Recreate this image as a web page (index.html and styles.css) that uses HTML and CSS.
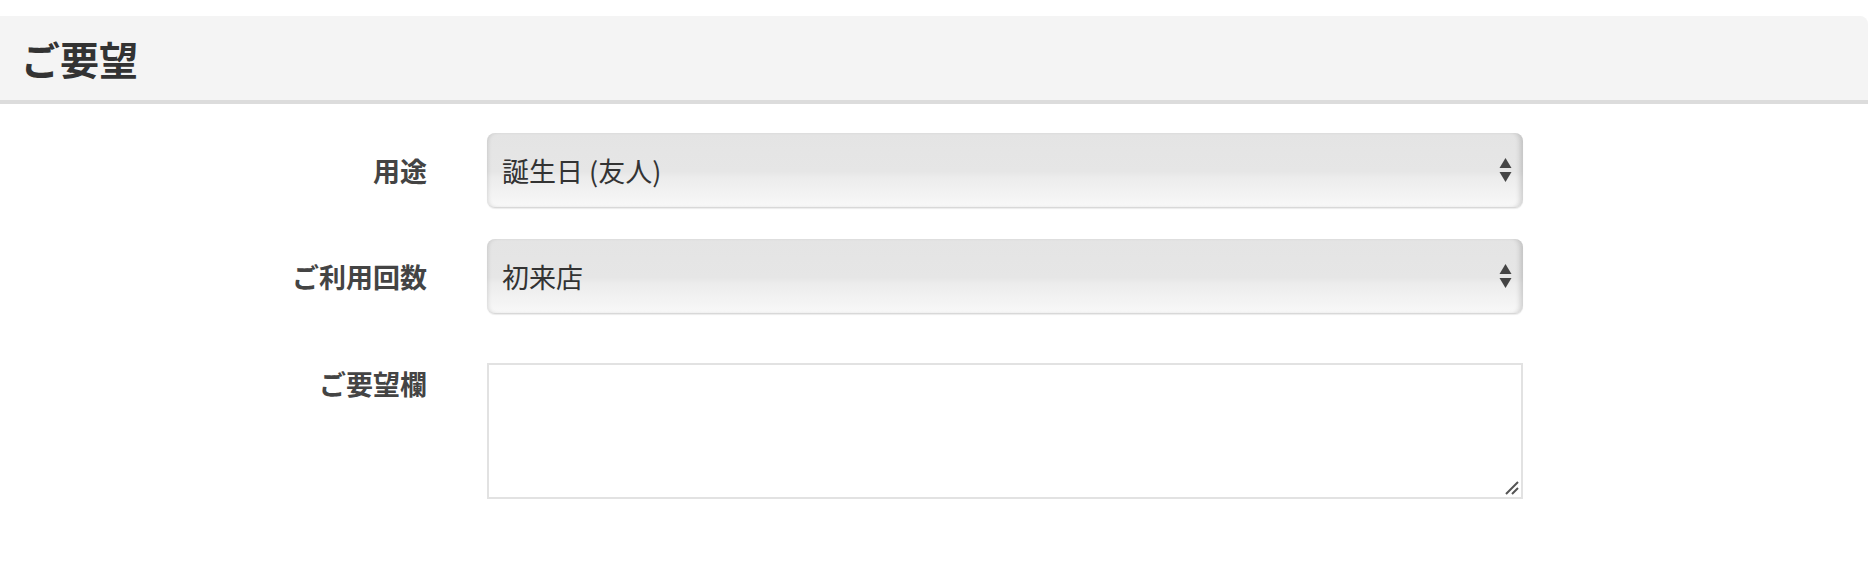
FILE: index.html
```html
<!DOCTYPE html>
<html lang="ja">
  <head>
    <meta charset="UTF-8" />
    <meta name="viewport" content="width=device-width, initial-scale=1.0" />
    <title>ご要望</title>
    <link rel="stylesheet" href="styles.css">
  </head>
  <body>
    <h2 class="section-title">ご要望</h2>

    <form class="request-form" onsubmit="return false;">
      <div class="form-row">
        <label class="form-label" for="purpose">用途</label>
        <div class="select-wrap">
          <select id="purpose" class="form-select">
            <option>誕生日 (友人)</option>
            <option>誕生日 (家族)</option>
            <option>記念日</option>
            <option>接待</option>
          </select>
          <svg class="select-arrow" width="13" height="26" viewBox="0 0 13 26">
            <path d="M6.5 1 L12.5 11 L0.5 11 Z" fill="#444" />
            <path d="M0.5 15 L12.5 15 L6.5 25 Z" fill="#444" />
          </svg>
        </div>
      </div>

      <div class="form-row">
        <label class="form-label" for="visits">ご利用回数</label>
        <div class="select-wrap">
          <select id="visits" class="form-select">
            <option>初来店</option>
            <option>2回目</option>
            <option>3回目以上</option>
          </select>
          <svg class="select-arrow" width="13" height="26" viewBox="0 0 13 26">
            <path d="M6.5 1 L12.5 11 L0.5 11 Z" fill="#444" />
            <path d="M0.5 15 L12.5 15 L6.5 25 Z" fill="#444" />
          </svg>
        </div>
      </div>

      <div class="form-row form-row-top">
        <label class="form-label" for="note">ご要望欄</label>
        <div class="textarea-wrap">
          <textarea id="note" class="form-textarea"></textarea>
          <!-- resize grip -->
          <svg class="resize-grip" width="14" height="14" viewBox="0 0 14 14">
            <path d="M1 13 L13 1 M7 13 L13 7" stroke="#555" stroke-width="2" />
          </svg>
        </div>
      </div>
    </form>
  </body>
</html>
```

FILE: styles.css
```css
body {
  margin: 0;
  background-color: #fff;
  font-family: "Noto Sans CJK JP", "Noto Sans", sans-serif;
  color: #333;
}
.section-title {
  margin: 16px 0 0;
  height: 84px;
  padding: 0 0 0 21px;
  display: flex;
  align-items: center;
  font-size: 39px;
  font-weight: bold;
  color: #333;
  background-color: #f4f4f4;
  border-bottom: 4px solid #dcdcdc;
  border-top-right-radius: 8px;
}
.request-form {
  display: flex;
  flex-direction: column;
  gap: 31px;
  padding-top: 29px;
}
.form-row {
  display: grid;
  grid-template-columns: 427px 1036px;
  column-gap: 60px;
  align-items: center;
}
.form-row-top {
  align-items: start;
  margin-top: 18px;
}
.form-label {
  text-align: right;
  font-size: 27px;
  font-weight: bold;
  color: #444;
}
.form-row-top .form-label {
  line-height: 1;
  padding-top: 7px;
}
.select-wrap,
.textarea-wrap {
  position: relative;
}
.form-select {
  display: block;
  width: 100%;
  height: 75px;
  margin: 0;
  padding: 0 40px 0 15px;
  font-family: inherit;
  font-size: 27px;
  color: #333;
  appearance: none;
  -webkit-appearance: none;
  border: none;
  border-bottom: 1px solid #d8d8d8;
  border-radius: 8px;
  background: linear-gradient(to bottom, #e4e4e4 0%, #e6e6e6 52%, #ececec 60%, #f8f8f8 100%);
  box-shadow: inset 3px 0 4px -2px rgba(0, 0, 0, 0.12), inset -6px 0 5px -3px rgba(0, 0, 0, 0.15), 0 1px 1px rgba(0, 0, 0, 0.08);
  outline: none;
}
.select-arrow {
  position: absolute;
  right: 11px;
  top: 24px;
  pointer-events: none;
}
.form-textarea {
  display: block;
  box-sizing: border-box;
  width: 1036px;
  height: 136px;
  margin: 0;
  border: 2px solid #e2e2e2;
  font-family: inherit;
  font-size: 20px;
  resize: none;
  outline: none;
}
.resize-grip {
  position: absolute;
  right: 4px;
  bottom: 4px;
  pointer-events: none;
}
```
